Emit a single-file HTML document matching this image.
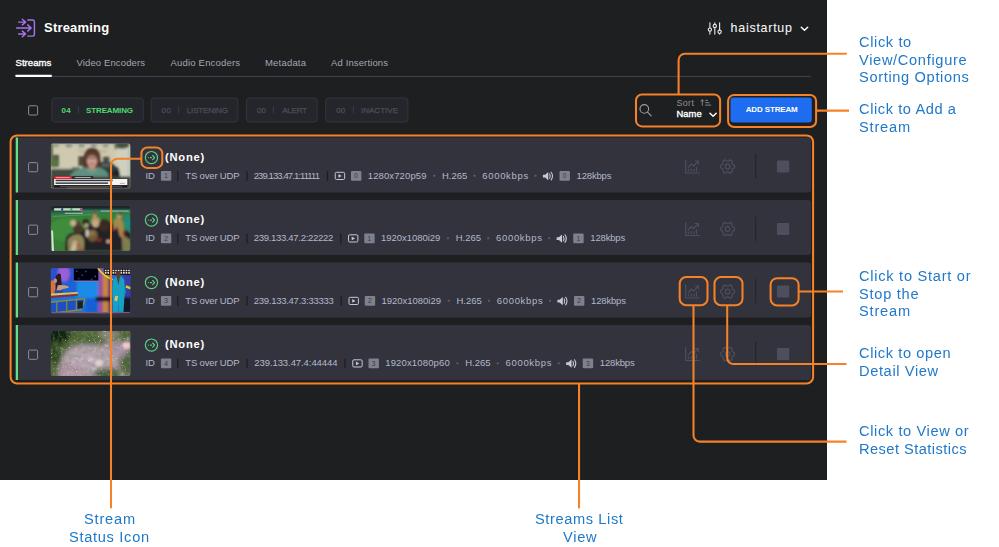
<!DOCTYPE html>
<html lang="en">
<head>
<meta charset="utf-8">
<title>Streaming - Streams List View</title>
<style>
html,body{margin:0;padding:0;background:#fff;}
body{width:999px;height:547px;position:relative;overflow:hidden;font-family:"Liberation Sans", sans-serif;}
#app{position:absolute;left:0;top:0;width:827px;height:480px;background:#1e1f21;}
svg{position:absolute;left:0;top:0;overflow:visible;}
.t{position:absolute;white-space:pre;line-height:1;font-family:"Liberation Sans", sans-serif;transform-origin:0 50%;}
.bd{position:absolute;width:10.4px;height:9.8px;line-height:9.8px;text-align:center;font-size:6.6px;color:#383945;font-family:"Liberation Sans", sans-serif;}
</style>
</head>
<body>
<div id="app">
</div>
<svg width="999" height="547" viewBox="0 0 999 547">
<path d="M18 137.5 H808 a3 3 0 0 1 3 3 V189.5 a3 3 0 0 1 -3 3 H18 Z" fill="#32333c"/>
<rect x="15.7" y="137.5" width="2.3" height="55" fill="#62e083"/>
<path d="M18 200.0 H808 a3 3 0 0 1 3 3 V252.0 a3 3 0 0 1 -3 3 H18 Z" fill="#32333c"/>
<rect x="15.7" y="200.0" width="2.3" height="55" fill="#62e083"/>
<path d="M18 262.5 H808 a3 3 0 0 1 3 3 V314.5 a3 3 0 0 1 -3 3 H18 Z" fill="#32333c"/>
<rect x="15.7" y="262.5" width="2.3" height="55" fill="#62e083"/>
<path d="M18 325.0 H808 a3 3 0 0 1 3 3 V377.0 a3 3 0 0 1 -3 3 H18 Z" fill="#32333c"/>
<rect x="15.7" y="325.0" width="2.3" height="55" fill="#62e083"/>
<rect x="51.8" y="98" width="91.50" height="24" rx="3" fill="#25262b" stroke="#34353c" stroke-width="1"/>
<rect x="77.90" y="106.5" width="1" height="7" fill="#3a3b43"/>
<rect x="151.1" y="98" width="86.80" height="24" rx="3" fill="#25262b" stroke="#34353c" stroke-width="1"/>
<rect x="178.10" y="106.5" width="1" height="7" fill="#3a3b43"/>
<rect x="246.5" y="98" width="70.70" height="24" rx="3" fill="#25262b" stroke="#34353c" stroke-width="1"/>
<rect x="272.90" y="106.5" width="1" height="7" fill="#3a3b43"/>
<rect x="325.7" y="98" width="82.20" height="24" rx="3" fill="#25262b" stroke="#34353c" stroke-width="1"/>
<rect x="352.80" y="106.5" width="1" height="7" fill="#3a3b43"/>
<rect x="28.6" y="105.80" width="9" height="9.2" rx="1" fill="none" stroke="#8c8d95" stroke-width="1"/>
<rect x="28.6" y="162.60" width="9" height="9.2" rx="1" fill="none" stroke="#8c8d95" stroke-width="1"/>
<rect x="28.6" y="225.10" width="9" height="9.2" rx="1" fill="none" stroke="#8c8d95" stroke-width="1"/>
<rect x="28.6" y="287.60" width="9" height="9.2" rx="1" fill="none" stroke="#8c8d95" stroke-width="1"/>
<rect x="28.6" y="350.10" width="9" height="9.2" rx="1" fill="none" stroke="#8c8d95" stroke-width="1"/>
<g fill="none" stroke="#a274ea" stroke-width="1.45" stroke-linecap="round" stroke-linejoin="round"><path d="M27.8 19.9 H32.6 a1.8 1.8 0 0 1 1.8 1.8 V34.3 a1.8 1.8 0 0 1 -1.8 1.8 H27.8"/><path d="M16.6 28 H31 M27.7 24.9 L31.2 28 L27.7 31.1"/><path d="M18.6 22.1 H25.4 M22.3 19.3 L25.6 22.1 L22.3 24.9"/><path d="M18.6 33.9 H25.4 M22.3 31.1 L25.6 33.9 L22.3 36.7"/></g>
<g fill="none" stroke="#e4e4ea" stroke-width="1.15" stroke-linecap="round"><path d="M709.9 22.8 V27.9 M709.9 31.3 V34.1"/><circle cx="709.9" cy="29.6" r="1.65"/><path d="M714.8 22.8 V24.3 M714.8 27.7 V34.1"/><circle cx="714.8" cy="26" r="1.65"/><path d="M719.6 22.8 V30.1 M719.6 33.5 V34.1"/><circle cx="719.6" cy="31.8" r="1.65"/></g>
<path d="M801.3 27.3 L804.5 30.3 L807.7 27.3" fill="none" stroke="#fff" stroke-width="1.5" stroke-linecap="round" stroke-linejoin="round"/>
<rect x="15.5" y="75.9" width="795.5" height="1.2" fill="#3d3e47"/>
<rect x="15.5" y="74.8" width="36.2" height="2.2" rx=".4" fill="#ffffff"/>
<rect x="730.5" y="97.4" width="81.3" height="25" rx="3" fill="#1e6df0"/>
<g fill="none" stroke="#9b9ca6" stroke-width="1.15" stroke-linecap="round"><circle cx="644.3" cy="108.9" r="4.3"/><path d="M647.5 112.2 L651.2 115.9"/></g>
<g fill="none" stroke="#8d8e98" stroke-width=".9" stroke-linecap="round" stroke-linejoin="round"><path d="M702.3 105.3 V99.9 M701 101.2 L702.3 99.8 L703.6 101.2"/><path d="M705.6 100.3 H707.6 M705.6 102.7 H709.2 M705.6 105.1 H710.8"/></g>
<path d="M710 113.3 L713.1 116.3 L716.2 113.3" fill="none" stroke="#fff" stroke-width="1.5" stroke-linecap="round" stroke-linejoin="round"/>
<defs><filter id="b0" x="-10%" y="-10%" width="120%" height="120%"><feGaussianBlur stdDeviation="0.45"/></filter><filter id="b1" x="-10%" y="-10%" width="120%" height="120%"><feGaussianBlur stdDeviation="0.85"/></filter><filter id="b2" x="-10%" y="-10%" width="120%" height="120%"><feGaussianBlur stdDeviation="1.1"/></filter><filter id="b3" x="-20%" y="-20%" width="140%" height="140%"><feGaussianBlur stdDeviation="2.6"/></filter><filter id="nz" x="0" y="0" width="100%" height="100%"><feTurbulence type="fractalNoise" baseFrequency="0.22" numOctaves="3" seed="7" result="n"/><feColorMatrix in="n" type="matrix" values="0 0 0 0 0.18  0 0 0 0 0.27  0 0 0 0 0.12  0 0 0 -3.2 1.75"/></filter><filter id="nz2" x="0" y="0" width="100%" height="100%"><feTurbulence type="fractalNoise" baseFrequency="0.3" numOctaves="2" seed="3" result="n"/><feColorMatrix in="n" type="matrix" values="0 0 0 0 0.85  0 0 0 0 0.72  0 0 0 0 0.8  0 0 0 -3.4 1.45"/></filter><clipPath id="tc"><rect x="0" y="0" width="79.5" height="45" rx="2"/></clipPath></defs>
<g transform="translate(50.8 143.5)" clip-path="url(#tc)"><rect width="80" height="45" fill="#cfc9b0"/><g filter="url(#b1)"><rect x="0" y="-1" width="80" height="2" fill="#a9a994"/><rect x="2.9" y="0.3" width="4.8" height="3.4" fill="#939b8c"/><rect x="15.2" y="0.3" width="5.8" height="3.6" fill="#8d9588"/><rect x="28" y="0.3" width="5.4" height="3.6" fill="#8d9588"/><rect x="40.4" y="0.3" width="5.2" height="3.6" fill="#8d9588"/><rect x="52.3" y="0.3" width="5.2" height="3.6" fill="#939b8c"/><rect x="27" y="6.4" width="31" height="1" fill="#b3ad94"/><rect x="29" y="8.6" width="27" height="1" fill="#b3ad94"/><rect x="-1" y="0" width="3" height="16" fill="#56603f"/><rect x="2.4" y="11.4" width="5.7" height="12" fill="#50564a"/><ellipse cx="3" cy="19.6" rx="4.4" ry="5" fill="#56763f"/><rect x="27.6" y="12.8" width="5.8" height="9.6" fill="#4b4b3e"/><rect x="52.3" y="13.3" width="6.2" height="7.8" fill="#4f4f42"/><rect x="65.6" y="3" width="14" height="32" fill="#cfd1c0"/><rect x="77" y="3" width="3" height="32" fill="#b9c3b2"/><ellipse cx="71" cy="1.6" rx="7.5" ry="3.6" fill="#46523f"/><rect x="64" y="0" width="2" height="6" fill="#6a705a"/><rect x="0" y="23.8" width="22" height="2.4" fill="#bfc0b0"/><rect x="0" y="25.6" width="27" height="8" fill="#424c3d"/><rect x="21" y="24" width="8" height="3" fill="#5a6450"/><path d="M49 18.6 H58.5 L68 24.6 L69.6 33.7 H48 Z" fill="#303a3c"/><path d="M51 19.8 H57.6 L62 23.4 H51 Z" fill="#52605f"/><ellipse cx="65.2" cy="30.4" rx="3.6" ry="3.8" fill="#1f2425"/><rect x="60" y="33" width="20" height="3" fill="#5a6252"/><path d="M32 25 Q31.5 13 34.5 8 Q38 3.6 43.5 4.8 Q49.4 6 49.6 14 L50.2 26 Q46 28 41 27 Z" fill="#58372a"/><path d="M36 6.6 Q41 3.6 46.6 6.8 Q42 5.4 36 6.6 Z" fill="#3a2219"/><path d="M38 22 H44.5 V27 H38 Z" fill="#b98676"/><ellipse cx="41.2" cy="17.2" rx="5.1" ry="6.7" fill="#c99c8e"/><path d="M36 12 Q41 9.4 46.4 12 L46.4 13.4 Q41 11.6 36 13.4 Z" fill="#6a4434"/><rect x="36.2" y="14" width="10.2" height="1.5" rx=".7" fill="#7a5c52"/><ellipse cx="41.3" cy="20.4" rx="2.1" ry=".85" fill="#b3566a"/><path d="M18.5 34 Q22 25.6 35 23.8 L41.3 27.6 L47.5 23.8 Q56 25.2 58.4 34 Z" fill="#5f8f80"/><path d="M36 23.6 L41.3 27.8 L46.6 23.6 L45 28.5 L41.3 30 L37.6 28.5 Z" fill="#6e9e8e"/><rect x="0" y="33.3" width="80" height="12" fill="#3b4139"/></g><g filter="url(#b0)"><rect x="3.3" y="32.6" width="18.2" height="3" fill="#d4232f"/><rect x="21.4" y="32.6" width="21" height="3" fill="#2a2d2d"/><rect x="24" y="33.6" width="16" height="1" fill="#b9b9b9"/><rect x="5" y="33.6" width="14" height="1" fill="#f0a0a0"/><rect x="3.3" y="35.5" width="73.2" height="6" fill="#f4f4f4"/><rect x="4.8" y="36.2" width="57" height="1.5" fill="#30313a"/><rect x="4.8" y="38.9" width="52.5" height="1.5" fill="#3e3f48"/><rect x="69" y="39.4" width="5" height="1" fill="#e0a0a0"/><rect x="3.3" y="41.8" width="73.2" height="2.3" fill="#1a1c1b"/><rect x="9" y="42.6" width="62" height=".7" fill="#5a5c5a"/><rect x="16" y="44.2" width="42" height="1" fill="#9a7a62"/></g></g>
<g transform="translate(50.8 206)" clip-path="url(#tc)"><rect width="80" height="45" fill="#397f37"/><g filter="url(#b2)"><ellipse cx="18" cy="24" rx="20" ry="12" fill="#3f8c3c"/><rect x="-4" y="-3" width="90" height="7" fill="#1c2622"/><rect x="-2" y="3.6" width="86" height="3.2" fill="#27483c"/><rect x="-2" y="6.2" width="40" height="2.6" fill="#2f6f55"/><rect x="30" y="4.2" width="55" height="2.2" fill="#3c8f70"/></g><g filter="url(#b0)"><rect x="3.3" y="2.2" width="28" height="2.4" fill="#c3dcc6"/><rect x="10.4" y="2.2" width="2" height="2.4" fill="#1c3f8c"/><rect x="19.6" y="2.2" width="2" height="2.4" fill="#2fa060"/><rect x="29.2" y="2.2" width="2.2" height="2.4" fill="#c04a80"/><rect x="14" y="6.8" width="18" height=".9" fill="#b8d8c8"/><rect x="50" y="4.6" width="28" height=".9" fill="#9fd0c0"/><path d="M.4 24.6 L2.2 24.6 L3.2 45 L1 45 Z" fill="#d3e4cf"/><path d="M2 10.4 L40 8.6" stroke="#6fb070" stroke-width=".6"/></g><g filter="url(#b1)"><path d="M14.6 45 L15 33 Q17 28 22 27 L33 24 L40 17 L58 15 L66 22 L80 26 V45 Z" fill="#232427"/><path d="M17 34 Q21 28 27.6 28.6 Q33 29.4 33.4 36 L33 44 L21 45 H17.4 Z" fill="#8b8557"/><path d="M20 45 L22 36 L26 37 L24.6 45 Z" fill="#c7bfa0"/><path d="M71 30 Q76 30 80 35 V45 H71.6 Z" fill="#7f7c4e"/><path d="M73.4 9.6 Q78 9 80 13 V27 Q76 25 74 19 Z" fill="#1c8c84"/><path d="M62.8 15 Q64.6 10.6 68.6 11.4 Q72.6 13 73 20 L73.4 31 Q70.4 33.4 68.6 29 L66.6 20 L62.4 25 Z" fill="#a58850"/><ellipse cx="68.6" cy="9.4" rx="2.7" ry="2.5" fill="#c3a283"/><ellipse cx="69.6" cy="8" rx="2.8" ry="1.6" fill="#6a4c30"/><ellipse cx="22.2" cy="17" rx="2.9" ry="3.3" fill="#cdae95"/><ellipse cx="27.6" cy="16.6" rx="2.2" ry="2.2" fill="#5a4030"/><ellipse cx="27.4" cy="23.2" rx="5" ry="4.9" fill="#4b3628"/><ellipse cx="35" cy="16.4" rx="3.3" ry="3.1" fill="#2b231f"/><ellipse cx="35.6" cy="19.4" rx="2.2" ry="2.2" fill="#bf9d88"/><ellipse cx="43.7" cy="8.6" rx="2.1" ry="2.5" fill="#b98e73"/><ellipse cx="43.6" cy="6.9" rx="2.1" ry="1.2" fill="#6a4a33"/><ellipse cx="44.8" cy="16.4" rx="4.1" ry="5" fill="#c9a887"/><path d="M40.6 15 Q41 10.4 45 10.6 Q49 11 49 15.6 Q45 13 40.6 15 Z" fill="#b59460"/><ellipse cx="53.4" cy="19.2" rx="5.4" ry="6.3" fill="#3a2c23"/><ellipse cx="41.8" cy="29.6" rx="5.4" ry="6.2" fill="#6f5836"/><ellipse cx="41.2" cy="27.4" rx="3.4" ry="2.8" fill="#8a7044"/><ellipse cx="36.4" cy="27" rx="1.6" ry="4" fill="#d0c8c0"/><ellipse cx="57.6" cy="35.4" rx="2.2" ry="1.9" fill="#c9a590"/><ellipse cx="24" cy="37" rx="2.4" ry="2.6" fill="#c9a590"/><path d="M26.6 37.6 L31 44.4" stroke="#c8202c" stroke-width="1.2"/><path d="M46.6 34.8 L50.4 33.2" stroke="#c8202c" stroke-width="1.5"/><path d="M62.6 22.8 L66 23 M71.6 25.6 L73.6 30.4" stroke="#c8202c" stroke-width="1.4"/></g></g>
<g transform="translate(50.8 268.3)" clip-path="url(#tc)"><rect width="80" height="45" fill="#1c74dc"/><g filter="url(#b2)"><rect x="-3" y="-3" width="26" height="16" fill="#2a4fd0"/><ellipse cx="13" cy="5" rx="6" ry="9" fill="#9a5fd8"/><rect x="25" y="13" width="22" height="17" fill="#1f8ae6"/><rect x="0" y="13" width="26" height="14" fill="#1a62d2"/><rect x="35" y="30" width="13" height="15" fill="#1560d6"/><rect x="47.5" y="-2" width="5" height="50" fill="#9a50a0"/><rect x="52" y="4" width="6" height="44" fill="#c8863a"/><rect x="57.4" y="8" width="4" height="40" fill="#6a3a6a"/><rect x="72" y="4" width="10" height="30" fill="#3a3aa8"/><rect x="70" y="29" width="12" height="18" fill="#14162a"/><rect x="45" y="28.5" width="16" height="4.5" fill="#15151c"/></g><g filter="url(#b0)"><rect x="23" y="0" width="24.5" height="12.5" fill="#05060f"/><rect x="23" y="12.4" width="24.5" height=".8" fill="#b070c0"/><circle cx="26" cy="3" r=".8" fill="#2a4fb0"/><circle cx="35" cy="3.2" r=".8" fill="#2a4fb0"/><circle cx="31.5" cy="7" r=".8" fill="#2a4fb0"/><circle cx="44.5" cy="8" r=".9" fill="#2a4fb0"/><circle cx="41" cy="11" r=".8" fill="#2a4fb0"/><circle cx="28" cy="10.5" r=".7" fill="#2a4fb0"/><rect x="53" y="0" width="27" height="6.8" fill="#1a1418"/><path d="M54 2.2 H79 M54 4.6 H79" stroke="#e8e0d0" stroke-width="1.7" stroke-dasharray="1.7 .9"/><path d="M47 0 Q53 8 62 11.5" stroke="#e8d020" stroke-width="1.5" fill="none"/><path d="M75 18 L80 20" stroke="#e8c820" stroke-width="2.4" fill="none"/><path d="M62.6 11.6 Q64 8.6 67.6 8.8 Q72 8.6 73.4 11.6 L74.4 22 L73.6 29 L72.6 45 H68.4 L67.8 33 L66.8 45 H62.4 L61.8 29 L61.4 20 Z" fill="#16a0c4"/><ellipse cx="67.4" cy="5.6" rx="2.5" ry="3" fill="#5b3827"/><path d="M66 8.6 L67.6 17 L69 8.6 Z" fill="#5a3a2a"/><path d="M61.6 12 L60.4 24 L61.8 29 Z M73.6 12 L75.2 24 L73.6 29 Z" fill="#118aac"/><rect x="64" y="27.6" width="2.8" height="5" fill="#d8c860" transform="rotate(14 65.4 30)"/><path d="M5 8 Q7.5 3.5 10 6 L11 17 L9 24 L5 24 Z" fill="#2a1a20"/><path d="M7 17 Q12 16 17.5 18 L18 19.5 L11 21 L10 24 H5 Z" fill="#c89a80"/><path d="M4 22 H12 V27 H3 Z" fill="#2a4aa0"/><ellipse cx="1.5" cy="19" rx="3" ry="7" fill="#e07030"/><ellipse cx="4.5" cy="12.5" rx="1.8" ry="2.4" fill="#c09078"/><path d="M0 25.3 L27 23.8 V26 L0 28.5 Z" fill="#d6c860"/><path d="M0 27.5 L27 25.5 V27.5 L0 30 Z" fill="#8a2a4a"/><path d="M0 34 L33 30.5 L34 32 L30 41.5 L0 45 Z" fill="#1a4fc4"/><path d="M0 34 L33 30.5 L34 32 L30 41.5 L0 45" fill="none" stroke="#8a8a3a" stroke-width="1.6"/><path d="M6 33.5 V44 M16 32.5 V43 M25.5 31.5 V42" stroke="#8a8a3a" stroke-width="1.2"/><rect x="27" y="33" width="5" height="7" fill="#1a1a2a"/><rect x="0" y="43.6" width="80" height="1.8" fill="#7a5a7a"/></g></g>
<defs><filter id="sp" x="0" y="0" width="100%" height="100%"><feTurbulence type="fractalNoise" baseFrequency="0.55" numOctaves="1" seed="11" result="n"/><feColorMatrix in="n" type="matrix" values="0 0 0 0 0.84  0 0 0 0 0.93  0 0 0 0 0.98  0 10 0 0 -6.9"/><feGaussianBlur stdDeviation="0.35"/></filter></defs>
<g transform="translate(50.8 331)" clip-path="url(#tc)"><rect width="80" height="45" fill="#a8929f"/><g filter="url(#b3)"><ellipse cx="38" cy="28" rx="26" ry="13" fill="#b7a4b2"/><ellipse cx="18" cy="40" rx="14" ry="8" fill="#b596a8"/><path d="M-5 -5 H85 V9 Q70 12 56 9.5 Q44 15 30 13 Q18 15 13 24 Q8 32 7 50 H-5 Z" fill="#4f6536"/><ellipse cx="2" cy="2" rx="19" ry="12" fill="#0c200c"/><ellipse cx="3" cy="22" rx="8" ry="12" fill="#2f4a20"/><ellipse cx="44" cy="11.5" rx="11" ry="2.4" fill="#43632a"/><ellipse cx="58" cy="3.5" rx="11" ry="4.4" fill="#90897c"/><ellipse cx="78" cy="32" rx="9" ry="13" fill="#4a6238"/><ellipse cx="56" cy="43" rx="13" ry="6" fill="#3f5a30"/><ellipse cx="70" cy="19" rx="7" ry="7" fill="#a892a8"/></g><rect width="80" height="45" filter="url(#nz)" opacity=".38"/><rect width="80" height="45" filter="url(#nz2)" opacity=".3"/><g filter="url(#b2)"><ellipse cx="75.5" cy="14.5" rx="4" ry="3.2" fill="#f2caca"/><ellipse cx="48" cy="32" rx="3.6" ry="3.2" fill="#dfd4cc"/><ellipse cx="40" cy="28.5" rx="2.8" ry="2.1" fill="#d9cad2"/></g><rect width="80" height="45" filter="url(#sp)" opacity=".75"/><g filter="url(#b1)" fill="#cfe6f2" opacity=".8"><circle cx="33.5" cy="8" r=".8"/><circle cx="68" cy="8.8" r="1.1"/><circle cx="77" cy="7.5" r="1.2"/><circle cx="30" cy="29" r="1.2"/><circle cx="22.5" cy="31.5" r="1.3"/><circle cx="43" cy="37.5" r="1.5"/><circle cx="32" cy="35" r=".9"/><circle cx="36" cy="26" r=".8"/><circle cx="62.5" cy="32" r=".8"/><circle cx="13" cy="10.5" r=".7" fill="#7fc8a8"/><circle cx="3.5" cy="13.5" r=".7" fill="#7fc8a8"/><circle cx="1.5" cy="35" r=".8" fill="#b8d070"/><circle cx="72" cy="42" r=".9" fill="#a8c860"/></g></g>
<g fill="none" stroke="#5ed083" stroke-width="1.2" stroke-linecap="round" stroke-linejoin="round"><circle cx="151.45" cy="157.6" r="6.1"/><path d="M152.7 155.5 L154.6 157.6 L152.7 159.7" stroke-width="1.15"/><path d="M148.4 157.6 h.01 M150.4 157.6 h1.1" stroke-width="1.15"/></g>
<g transform="translate(685 159.7)" fill="none" stroke="#4e4f5e" stroke-width="1.15" stroke-linecap="round" stroke-linejoin="round"><path d="M.7 .4 V13.3 H14.2"/><path d="M3.1 7.6 L6.4 4.3 L8.5 6.4 L13.2 1.4"/><path d="M10.2 1.3 H13.3 V4.4"/><path d="M3.4 9.7 V11.4 M6.1 9 V11.4 M8.9 9.5 V11.4 M11.4 7.4 V11.4"/></g>
<g transform="translate(727.6 166.5)" fill="none" stroke="#4e4f5e" stroke-width="1.2" stroke-linejoin="round"><path d="M4.68 -2.70 Q5.20 -1.79 6.15 -1.65 Q7.09 -1.51 7.09 0.00 Q7.09 1.51 6.15 1.65 Q5.20 1.79 4.68 2.70 Q4.15 3.61 4.50 4.50 Q4.85 5.39 3.55 6.14 Q2.24 6.90 1.64 6.15 Q1.05 5.40 0.00 5.40 Q-1.05 5.40 -1.64 6.15 Q-2.24 6.90 -3.55 6.14 Q-4.85 5.39 -4.50 4.50 Q-4.15 3.61 -4.68 2.70 Q-5.20 1.79 -6.15 1.65 Q-7.09 1.51 -7.09 0.00 Q-7.09 -1.51 -6.15 -1.65 Q-5.20 -1.79 -4.68 -2.70 Q-4.15 -3.61 -4.50 -4.50 Q-4.85 -5.39 -3.55 -6.14 Q-2.24 -6.90 -1.64 -6.15 Q-1.05 -5.40 -0.00 -5.40 Q1.05 -5.40 1.64 -6.15 Q2.24 -6.90 3.55 -6.14 Q4.85 -5.39 4.50 -4.50 Q4.15 -3.61 4.68 -2.70 Z"/><circle r="2.3"/></g>
<rect x="755" y="154.0" width="1.2" height="24.5" fill="#25262b"/>
<rect x="777" y="160.4" width="12.3" height="12.2" rx="1" fill="#4d4e5e"/>
<g fill="none" stroke="#5ed083" stroke-width="1.2" stroke-linecap="round" stroke-linejoin="round"><circle cx="151.45" cy="220.1" r="6.1"/><path d="M152.7 218.0 L154.6 220.1 L152.7 222.2" stroke-width="1.15"/><path d="M148.4 220.1 h.01 M150.4 220.1 h1.1" stroke-width="1.15"/></g>
<g transform="translate(685 222.2)" fill="none" stroke="#4e4f5e" stroke-width="1.15" stroke-linecap="round" stroke-linejoin="round"><path d="M.7 .4 V13.3 H14.2"/><path d="M3.1 7.6 L6.4 4.3 L8.5 6.4 L13.2 1.4"/><path d="M10.2 1.3 H13.3 V4.4"/><path d="M3.4 9.7 V11.4 M6.1 9 V11.4 M8.9 9.5 V11.4 M11.4 7.4 V11.4"/></g>
<g transform="translate(727.6 229.0)" fill="none" stroke="#4e4f5e" stroke-width="1.2" stroke-linejoin="round"><path d="M4.68 -2.70 Q5.20 -1.79 6.15 -1.65 Q7.09 -1.51 7.09 0.00 Q7.09 1.51 6.15 1.65 Q5.20 1.79 4.68 2.70 Q4.15 3.61 4.50 4.50 Q4.85 5.39 3.55 6.14 Q2.24 6.90 1.64 6.15 Q1.05 5.40 0.00 5.40 Q-1.05 5.40 -1.64 6.15 Q-2.24 6.90 -3.55 6.14 Q-4.85 5.39 -4.50 4.50 Q-4.15 3.61 -4.68 2.70 Q-5.20 1.79 -6.15 1.65 Q-7.09 1.51 -7.09 0.00 Q-7.09 -1.51 -6.15 -1.65 Q-5.20 -1.79 -4.68 -2.70 Q-4.15 -3.61 -4.50 -4.50 Q-4.85 -5.39 -3.55 -6.14 Q-2.24 -6.90 -1.64 -6.15 Q-1.05 -5.40 -0.00 -5.40 Q1.05 -5.40 1.64 -6.15 Q2.24 -6.90 3.55 -6.14 Q4.85 -5.39 4.50 -4.50 Q4.15 -3.61 4.68 -2.70 Z"/><circle r="2.3"/></g>
<rect x="755" y="216.5" width="1.2" height="24.5" fill="#25262b"/>
<rect x="777" y="222.9" width="12.3" height="12.2" rx="1" fill="#4d4e5e"/>
<g fill="none" stroke="#5ed083" stroke-width="1.2" stroke-linecap="round" stroke-linejoin="round"><circle cx="151.45" cy="282.6" r="6.1"/><path d="M152.7 280.5 L154.6 282.6 L152.7 284.7" stroke-width="1.15"/><path d="M148.4 282.6 h.01 M150.4 282.6 h1.1" stroke-width="1.15"/></g>
<g transform="translate(685 284.7)" fill="none" stroke="#4e4f5e" stroke-width="1.15" stroke-linecap="round" stroke-linejoin="round"><path d="M.7 .4 V13.3 H14.2"/><path d="M3.1 7.6 L6.4 4.3 L8.5 6.4 L13.2 1.4"/><path d="M10.2 1.3 H13.3 V4.4"/><path d="M3.4 9.7 V11.4 M6.1 9 V11.4 M8.9 9.5 V11.4 M11.4 7.4 V11.4"/></g>
<g transform="translate(727.6 291.5)" fill="none" stroke="#4e4f5e" stroke-width="1.2" stroke-linejoin="round"><path d="M4.68 -2.70 Q5.20 -1.79 6.15 -1.65 Q7.09 -1.51 7.09 0.00 Q7.09 1.51 6.15 1.65 Q5.20 1.79 4.68 2.70 Q4.15 3.61 4.50 4.50 Q4.85 5.39 3.55 6.14 Q2.24 6.90 1.64 6.15 Q1.05 5.40 0.00 5.40 Q-1.05 5.40 -1.64 6.15 Q-2.24 6.90 -3.55 6.14 Q-4.85 5.39 -4.50 4.50 Q-4.15 3.61 -4.68 2.70 Q-5.20 1.79 -6.15 1.65 Q-7.09 1.51 -7.09 0.00 Q-7.09 -1.51 -6.15 -1.65 Q-5.20 -1.79 -4.68 -2.70 Q-4.15 -3.61 -4.50 -4.50 Q-4.85 -5.39 -3.55 -6.14 Q-2.24 -6.90 -1.64 -6.15 Q-1.05 -5.40 -0.00 -5.40 Q1.05 -5.40 1.64 -6.15 Q2.24 -6.90 3.55 -6.14 Q4.85 -5.39 4.50 -4.50 Q4.15 -3.61 4.68 -2.70 Z"/><circle r="2.3"/></g>
<rect x="755" y="279.0" width="1.2" height="24.5" fill="#25262b"/>
<rect x="777" y="285.4" width="12.3" height="12.2" rx="1" fill="#4d4e5e"/>
<g fill="none" stroke="#5ed083" stroke-width="1.2" stroke-linecap="round" stroke-linejoin="round"><circle cx="151.45" cy="345.1" r="6.1"/><path d="M152.7 343.0 L154.6 345.1 L152.7 347.2" stroke-width="1.15"/><path d="M148.4 345.1 h.01 M150.4 345.1 h1.1" stroke-width="1.15"/></g>
<g transform="translate(685 347.2)" fill="none" stroke="#4e4f5e" stroke-width="1.15" stroke-linecap="round" stroke-linejoin="round"><path d="M.7 .4 V13.3 H14.2"/><path d="M3.1 7.6 L6.4 4.3 L8.5 6.4 L13.2 1.4"/><path d="M10.2 1.3 H13.3 V4.4"/><path d="M3.4 9.7 V11.4 M6.1 9 V11.4 M8.9 9.5 V11.4 M11.4 7.4 V11.4"/></g>
<g transform="translate(727.6 354.0)" fill="none" stroke="#4e4f5e" stroke-width="1.2" stroke-linejoin="round"><path d="M4.68 -2.70 Q5.20 -1.79 6.15 -1.65 Q7.09 -1.51 7.09 0.00 Q7.09 1.51 6.15 1.65 Q5.20 1.79 4.68 2.70 Q4.15 3.61 4.50 4.50 Q4.85 5.39 3.55 6.14 Q2.24 6.90 1.64 6.15 Q1.05 5.40 0.00 5.40 Q-1.05 5.40 -1.64 6.15 Q-2.24 6.90 -3.55 6.14 Q-4.85 5.39 -4.50 4.50 Q-4.15 3.61 -4.68 2.70 Q-5.20 1.79 -6.15 1.65 Q-7.09 1.51 -7.09 0.00 Q-7.09 -1.51 -6.15 -1.65 Q-5.20 -1.79 -4.68 -2.70 Q-4.15 -3.61 -4.50 -4.50 Q-4.85 -5.39 -3.55 -6.14 Q-2.24 -6.90 -1.64 -6.15 Q-1.05 -5.40 -0.00 -5.40 Q1.05 -5.40 1.64 -6.15 Q2.24 -6.90 3.55 -6.14 Q4.85 -5.39 4.50 -4.50 Q4.15 -3.61 4.68 -2.70 Z"/><circle r="2.3"/></g>
<rect x="755" y="341.5" width="1.2" height="24.5" fill="#25262b"/>
<rect x="777" y="347.9" width="12.3" height="12.2" rx="1" fill="#4d4e5e"/>
<rect x="177.10" y="171.20" width="1.2" height="9.6" fill="#1c1d20"/>
<rect x="246.40" y="171.20" width="1.2" height="9.6" fill="#1c1d20"/>
<rect x="326.90" y="171.20" width="1.2" height="9.6" fill="#1c1d20"/>
<rect x="177.10" y="233.70" width="1.2" height="9.6" fill="#1c1d20"/>
<rect x="246.40" y="233.70" width="1.2" height="9.6" fill="#1c1d20"/>
<rect x="340.15" y="233.70" width="1.2" height="9.6" fill="#1c1d20"/>
<rect x="177.10" y="296.20" width="1.2" height="9.6" fill="#1c1d20"/>
<rect x="246.40" y="296.20" width="1.2" height="9.6" fill="#1c1d20"/>
<rect x="340.65" y="296.20" width="1.2" height="9.6" fill="#1c1d20"/>
<rect x="177.10" y="358.70" width="1.2" height="9.6" fill="#1c1d20"/>
<rect x="246.40" y="358.70" width="1.2" height="9.6" fill="#1c1d20"/>
<rect x="344.40" y="358.70" width="1.2" height="9.6" fill="#1c1d20"/>
<rect x="433.25" y="174.70" width="2" height="2" rx=".5" fill="#5c5d6b"/>
<rect x="473.50" y="174.70" width="2" height="2" rx=".5" fill="#5c5d6b"/>
<rect x="534.50" y="174.70" width="2" height="2" rx=".5" fill="#5c5d6b"/>
<rect x="447.00" y="237.20" width="2" height="2" rx=".5" fill="#5c5d6b"/>
<rect x="487.25" y="237.20" width="2" height="2" rx=".5" fill="#5c5d6b"/>
<rect x="548.25" y="237.20" width="2" height="2" rx=".5" fill="#5c5d6b"/>
<rect x="447.75" y="299.70" width="2" height="2" rx=".5" fill="#5c5d6b"/>
<rect x="488.00" y="299.70" width="2" height="2" rx=".5" fill="#5c5d6b"/>
<rect x="549.00" y="299.70" width="2" height="2" rx=".5" fill="#5c5d6b"/>
<rect x="456.50" y="362.20" width="2" height="2" rx=".5" fill="#5c5d6b"/>
<rect x="496.75" y="362.20" width="2" height="2" rx=".5" fill="#5c5d6b"/>
<rect x="557.75" y="362.20" width="2" height="2" rx=".5" fill="#5c5d6b"/>
<rect x="160.90" y="171.00" width="10.4" height="9.8" rx="1" fill="#7f808d"/>
<rect x="351.00" y="171.00" width="10.4" height="9.8" rx="1" fill="#7f808d"/>
<rect x="559.50" y="171.00" width="10.4" height="9.8" rx="1" fill="#7f808d"/>
<rect x="160.90" y="233.50" width="10.4" height="9.8" rx="1" fill="#7f808d"/>
<rect x="364.25" y="233.50" width="10.4" height="9.8" rx="1" fill="#7f808d"/>
<rect x="573.25" y="233.50" width="10.4" height="9.8" rx="1" fill="#7f808d"/>
<rect x="160.90" y="296.00" width="10.4" height="9.8" rx="1" fill="#7f808d"/>
<rect x="364.75" y="296.00" width="10.4" height="9.8" rx="1" fill="#7f808d"/>
<rect x="574.00" y="296.00" width="10.4" height="9.8" rx="1" fill="#7f808d"/>
<rect x="160.90" y="358.50" width="10.4" height="9.8" rx="1" fill="#7f808d"/>
<rect x="368.50" y="358.50" width="10.4" height="9.8" rx="1" fill="#7f808d"/>
<rect x="582.75" y="358.50" width="10.4" height="9.8" rx="1" fill="#7f808d"/>
<g transform="translate(334.75 171.80)"><rect x=".5" y=".5" width="9.4" height="7.2" rx="1.2" fill="none" stroke="#c6c8d8" stroke-width="1"/><path d="M3.7 2.2 L7 4.1 L3.7 6 Z" fill="#c6c8d8"/></g>
<g transform="translate(542.90 171.70)" fill="#c6c8d8"><path d="M0 3 H2.2 L5.4 .2 V8.6 L2.2 5.8 H0 Z"/><path d="M6.8 2.2 Q8 4.4 6.8 6.6" fill="none" stroke="#c6c8d8" stroke-width="1.1" stroke-linecap="round"/><path d="M8.3 .6 Q10.9 4.4 8.3 8.2" fill="none" stroke="#c6c8d8" stroke-width="1.1" stroke-linecap="round"/></g>
<g transform="translate(348.00 234.30)"><rect x=".5" y=".5" width="9.4" height="7.2" rx="1.2" fill="none" stroke="#c6c8d8" stroke-width="1"/><path d="M3.7 2.2 L7 4.1 L3.7 6 Z" fill="#c6c8d8"/></g>
<g transform="translate(556.65 234.20)" fill="#c6c8d8"><path d="M0 3 H2.2 L5.4 .2 V8.6 L2.2 5.8 H0 Z"/><path d="M6.8 2.2 Q8 4.4 6.8 6.6" fill="none" stroke="#c6c8d8" stroke-width="1.1" stroke-linecap="round"/><path d="M8.3 .6 Q10.9 4.4 8.3 8.2" fill="none" stroke="#c6c8d8" stroke-width="1.1" stroke-linecap="round"/></g>
<g transform="translate(348.50 296.80)"><rect x=".5" y=".5" width="9.4" height="7.2" rx="1.2" fill="none" stroke="#c6c8d8" stroke-width="1"/><path d="M3.7 2.2 L7 4.1 L3.7 6 Z" fill="#c6c8d8"/></g>
<g transform="translate(557.40 296.70)" fill="#c6c8d8"><path d="M0 3 H2.2 L5.4 .2 V8.6 L2.2 5.8 H0 Z"/><path d="M6.8 2.2 Q8 4.4 6.8 6.6" fill="none" stroke="#c6c8d8" stroke-width="1.1" stroke-linecap="round"/><path d="M8.3 .6 Q10.9 4.4 8.3 8.2" fill="none" stroke="#c6c8d8" stroke-width="1.1" stroke-linecap="round"/></g>
<g transform="translate(352.25 359.30)"><rect x=".5" y=".5" width="9.4" height="7.2" rx="1.2" fill="none" stroke="#c6c8d8" stroke-width="1"/><path d="M3.7 2.2 L7 4.1 L3.7 6 Z" fill="#c6c8d8"/></g>
<g transform="translate(566.15 359.20)" fill="#c6c8d8"><path d="M0 3 H2.2 L5.4 .2 V8.6 L2.2 5.8 H0 Z"/><path d="M6.8 2.2 Q8 4.4 6.8 6.6" fill="none" stroke="#c6c8d8" stroke-width="1.1" stroke-linecap="round"/><path d="M8.3 .6 Q10.9 4.4 8.3 8.2" fill="none" stroke="#c6c8d8" stroke-width="1.1" stroke-linecap="round"/></g>
</svg>
<span class="bd" style="left:160.90px;top:171.00px">1</span>
<span class="bd" style="left:351.00px;top:171.00px">0</span>
<span class="bd" style="left:559.50px;top:171.00px">0</span>
<span class="bd" style="left:160.90px;top:233.50px">2</span>
<span class="bd" style="left:364.25px;top:233.50px">1</span>
<span class="bd" style="left:573.25px;top:233.50px">1</span>
<span class="bd" style="left:160.90px;top:296.00px">3</span>
<span class="bd" style="left:364.75px;top:296.00px">2</span>
<span class="bd" style="left:574.00px;top:296.00px">2</span>
<span class="bd" style="left:160.90px;top:358.50px">4</span>
<span class="bd" style="left:368.50px;top:358.50px">3</span>
<span class="bd" style="left:582.75px;top:358.50px">3</span>
<span class="t" style="left:44.10px;top:21.20px;font-size:13px;color:#ffffff;letter-spacing:0.178px;font-weight:700;">Streaming</span>
<span class="t" style="left:730.60px;top:21.90px;font-size:12.4px;color:#f4f4f6;letter-spacing:0.764px;-webkit-text-stroke:0.08px #f4f4f6;">haistartup</span>
<span class="t" style="left:15.50px;top:57.60px;font-size:9.6px;color:#ffffff;letter-spacing:0.011px;-webkit-text-stroke:0.35px #ffffff;">Streams</span>
<span class="t" style="left:76.50px;top:57.60px;font-size:9.5px;color:#a4a6b3;letter-spacing:0.123px;">Video Encoders</span>
<span class="t" style="left:170.50px;top:57.60px;font-size:9.5px;color:#a4a6b3;letter-spacing:0.194px;">Audio Encoders</span>
<span class="t" style="left:265.00px;top:57.60px;font-size:9.5px;color:#a4a6b3;letter-spacing:0.196px;">Metadata</span>
<span class="t" style="left:331.00px;top:57.60px;font-size:9.5px;color:#a4a6b3;letter-spacing:0.129px;">Ad Insertions</span>
<span class="t" style="left:61.40px;top:107.00px;font-size:8px;color:#4fd96f;letter-spacing:0.394px;font-weight:700;">04</span>
<span class="t" style="left:86.00px;top:107.00px;font-size:8px;color:#4fd96f;letter-spacing:-0.125px;font-weight:700;">STREAMING</span>
<span class="t" style="left:161.60px;top:107.00px;font-size:8px;color:#4c4d59;letter-spacing:0.394px;-webkit-text-stroke:0.25px #4c4d59;">00</span>
<span class="t" style="left:186.70px;top:107.00px;font-size:8px;color:#4c4d59;letter-spacing:-0.117px;-webkit-text-stroke:0.25px #4c4d59;">LISTENING</span>
<span class="t" style="left:256.90px;top:107.00px;font-size:8px;color:#4c4d59;letter-spacing:0.094px;-webkit-text-stroke:0.25px #4c4d59;">00</span>
<span class="t" style="left:282.20px;top:107.00px;font-size:8px;color:#4c4d59;letter-spacing:-0.210px;-webkit-text-stroke:0.25px #4c4d59;">ALERT</span>
<span class="t" style="left:336.20px;top:107.00px;font-size:8px;color:#4c4d59;letter-spacing:0.094px;-webkit-text-stroke:0.25px #4c4d59;">00</span>
<span class="t" style="left:361.00px;top:107.00px;font-size:8px;color:#4c4d59;letter-spacing:0.013px;-webkit-text-stroke:0.25px #4c4d59;">INACTIVE</span>
<span class="t" style="left:676.40px;top:98.60px;font-size:9px;color:#8d8e98;letter-spacing:0.361px;">Sort</span>
<span class="t" style="left:676.40px;top:109.00px;font-size:9.4px;color:#ffffff;letter-spacing:0.095px;-webkit-text-stroke:0.35px #ffffff;">Name</span>
<span class="t" style="left:745.70px;top:106.20px;font-size:8px;color:#ffffff;letter-spacing:-0.138px;font-weight:700;">ADD STREAM</span>
<span class="t" style="left:165.00px;top:151.50px;font-size:11.2px;color:#ffffff;letter-spacing:0.776px;font-weight:700;">(None)</span>
<span class="t" style="left:145.60px;top:170.75px;font-size:9.5px;color:#b3b8cb;letter-spacing:-0.200px;">ID</span>
<span class="t" style="left:185.30px;top:170.75px;font-size:9.5px;color:#b3b8cb;letter-spacing:-0.167px;">TS over UDP</span>
<span class="t" style="left:253.75px;top:170.75px;font-size:9.5px;color:#b3b8cb;letter-spacing:-0.910px;">239.133.47.1:11111</span>
<span class="t" style="left:367.75px;top:170.75px;font-size:9.5px;color:#b3b8cb;letter-spacing:0.116px;">1280x720p59</span>
<span class="t" style="left:442.00px;top:170.75px;font-size:9.5px;color:#b3b8cb;letter-spacing:-0.015px;">H.265</span>
<span class="t" style="left:482.25px;top:170.75px;font-size:9.5px;color:#b3b8cb;letter-spacing:0.685px;">6000kbps</span>
<span class="t" style="left:576.50px;top:170.75px;font-size:9.5px;color:#b3b8cb;letter-spacing:-0.154px;">128kbps</span>
<span class="t" style="left:165.00px;top:214.00px;font-size:11.2px;color:#ffffff;letter-spacing:0.776px;font-weight:700;">(None)</span>
<span class="t" style="left:145.60px;top:233.25px;font-size:9.5px;color:#b3b8cb;letter-spacing:-0.200px;">ID</span>
<span class="t" style="left:185.30px;top:233.25px;font-size:9.5px;color:#b3b8cb;letter-spacing:-0.167px;">TS over UDP</span>
<span class="t" style="left:253.75px;top:233.25px;font-size:9.5px;color:#b3b8cb;letter-spacing:-0.296px;">239.133.47.2:22222</span>
<span class="t" style="left:381.00px;top:233.25px;font-size:9.5px;color:#b3b8cb;letter-spacing:-0.041px;">1920x1080i29</span>
<span class="t" style="left:455.75px;top:233.25px;font-size:9.5px;color:#b3b8cb;letter-spacing:-0.015px;">H.265</span>
<span class="t" style="left:496.00px;top:233.25px;font-size:9.5px;color:#b3b8cb;letter-spacing:0.685px;">6000kbps</span>
<span class="t" style="left:590.25px;top:233.25px;font-size:9.5px;color:#b3b8cb;letter-spacing:-0.154px;">128kbps</span>
<span class="t" style="left:165.00px;top:276.50px;font-size:11.2px;color:#ffffff;letter-spacing:0.776px;font-weight:700;">(None)</span>
<span class="t" style="left:145.60px;top:295.75px;font-size:9.5px;color:#b3b8cb;letter-spacing:-0.200px;">ID</span>
<span class="t" style="left:185.30px;top:295.75px;font-size:9.5px;color:#b3b8cb;letter-spacing:-0.167px;">TS over UDP</span>
<span class="t" style="left:253.75px;top:295.75px;font-size:9.5px;color:#b3b8cb;letter-spacing:-0.267px;">239.133.47.3:33333</span>
<span class="t" style="left:381.50px;top:295.75px;font-size:9.5px;color:#b3b8cb;letter-spacing:-0.018px;">1920x1080i29</span>
<span class="t" style="left:456.50px;top:295.75px;font-size:9.5px;color:#b3b8cb;letter-spacing:-0.015px;">H.265</span>
<span class="t" style="left:496.75px;top:295.75px;font-size:9.5px;color:#b3b8cb;letter-spacing:0.685px;">6000kbps</span>
<span class="t" style="left:591.00px;top:295.75px;font-size:9.5px;color:#b3b8cb;letter-spacing:-0.154px;">128kbps</span>
<span class="t" style="left:165.00px;top:339.00px;font-size:11.2px;color:#ffffff;letter-spacing:0.776px;font-weight:700;">(None)</span>
<span class="t" style="left:145.60px;top:358.25px;font-size:9.5px;color:#b3b8cb;letter-spacing:-0.200px;">ID</span>
<span class="t" style="left:185.30px;top:358.25px;font-size:9.5px;color:#b3b8cb;letter-spacing:-0.167px;">TS over UDP</span>
<span class="t" style="left:254.25px;top:358.25px;font-size:9.5px;color:#b3b8cb;letter-spacing:-0.075px;">239.133.47.4:44444</span>
<span class="t" style="left:385.25px;top:358.25px;font-size:9.5px;color:#b3b8cb;letter-spacing:0.148px;">1920x1080p60</span>
<span class="t" style="left:465.25px;top:358.25px;font-size:9.5px;color:#b3b8cb;letter-spacing:-0.015px;">H.265</span>
<span class="t" style="left:505.50px;top:358.25px;font-size:9.5px;color:#b3b8cb;letter-spacing:0.685px;">6000kbps</span>
<span class="t" style="left:599.75px;top:358.25px;font-size:9.5px;color:#b3b8cb;letter-spacing:-0.154px;">128kbps</span>
<span class="t" style="left:858.70px;top:35.70px;font-size:13.8px;color:#1f78c8;letter-spacing:0.573px;transform:scaleX(1.06);">Click to</span>
<span class="t" style="left:858.70px;top:53.50px;font-size:13.8px;color:#1f78c8;letter-spacing:0.631px;transform:scaleX(1.06);">View/Configure</span>
<span class="t" style="left:858.70px;top:70.60px;font-size:13.8px;color:#1f78c8;letter-spacing:0.612px;transform:scaleX(1.06);">Sorting Options</span>
<span class="t" style="left:858.70px;top:102.70px;font-size:13.8px;color:#1f78c8;letter-spacing:0.543px;transform:scaleX(1.06);">Click to Add a</span>
<span class="t" style="left:858.70px;top:120.60px;font-size:13.8px;color:#1f78c8;letter-spacing:0.764px;transform:scaleX(1.06);">Stream</span>
<span class="t" style="left:858.70px;top:269.70px;font-size:13.8px;color:#1f78c8;letter-spacing:0.686px;transform:scaleX(1.06);">Click to Start or</span>
<span class="t" style="left:858.70px;top:287.50px;font-size:13.8px;color:#1f78c8;letter-spacing:0.689px;transform:scaleX(1.06);">Stop the</span>
<span class="t" style="left:858.70px;top:304.75px;font-size:13.8px;color:#1f78c8;letter-spacing:0.764px;transform:scaleX(1.06);">Stream</span>
<span class="t" style="left:858.70px;top:346.60px;font-size:13.8px;color:#1f78c8;letter-spacing:0.554px;transform:scaleX(1.06);">Click to open</span>
<span class="t" style="left:858.70px;top:364.65px;font-size:13.8px;color:#1f78c8;letter-spacing:0.586px;transform:scaleX(1.06);">Detail View</span>
<span class="t" style="left:858.70px;top:424.50px;font-size:13.8px;color:#1f78c8;letter-spacing:0.571px;transform:scaleX(1.06);">Click to View or</span>
<span class="t" style="left:858.70px;top:442.70px;font-size:13.8px;color:#1f78c8;letter-spacing:0.429px;transform:scaleX(1.06);">Reset Statistics</span>
<span class="t" style="left:83.60px;top:512.80px;font-size:13.8px;color:#1f78c8;letter-spacing:0.745px;transform:scaleX(1.06);">Stream</span>
<span class="t" style="left:69.10px;top:530.50px;font-size:13.8px;color:#1f78c8;letter-spacing:0.653px;transform:scaleX(1.06);">Status Icon</span>
<span class="t" style="left:535.30px;top:512.80px;font-size:13.8px;color:#1f78c8;letter-spacing:0.568px;transform:scaleX(1.06);">Streams List</span>
<span class="t" style="left:562.60px;top:530.50px;font-size:13.8px;color:#1f78c8;letter-spacing:0.681px;transform:scaleX(1.06);">View</span>
<svg width="999" height="547" viewBox="0 0 999 547">
<g fill="none" stroke="#f58229" stroke-width="2.05" stroke-linecap="butt" stroke-linejoin="round">
<rect x="10.6" y="135.4" width="802.5" height="248" rx="6.5"/>
<rect x="636" y="94.4" width="84.1" height="32" rx="6"/>
<path d="M678.6 94.4 V60 a6.2 6.2 0 0 1 6.2 -6.2 H846.8"/>
<rect x="728.1" y="95" width="88" height="32" rx="6"/>
<path d="M816.1 110.6 H849"/>
<rect x="141.4" y="147.4" width="20.9" height="20.5" rx="6"/>
<path d="M141.4 158.8 H117.3 a6.3 6.3 0 0 0 -6.3 6.3 V508.3"/>
<path d="M579.05 383.4 V508.4"/>
<rect x="679.7" y="277" width="27.8" height="28.2" rx="6.5"/>
<rect x="714.5" y="277" width="28" height="28.2" rx="6.5"/>
<rect x="770.6" y="278.2" width="28" height="27.2" rx="6.5"/>
<path d="M798.6 291.5 H843"/>
<path d="M693.5 305.2 V435.4 a6.2 6.2 0 0 0 6.2 6.2 H846.5"/>
<path d="M727.2 305.2 V357.8 a6.2 6.2 0 0 0 6.2 6.2 H846.5"/>
</g>
</svg>
</body>
</html>
